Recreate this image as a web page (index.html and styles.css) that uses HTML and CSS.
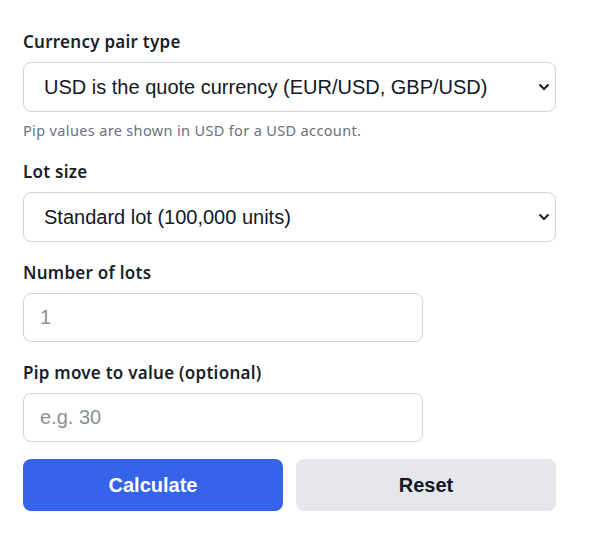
FILE: index.html
```html
<!DOCTYPE html>
<html lang="en">
<head>
<meta charset="utf-8">
<link rel="stylesheet" href="styles.css">
</head>
<body>
<form class="calc">
  <div class="group">
    <label class="label" for="pair">Currency pair type</label>
    <div class="select-wrap">
      <select id="pair" class="field select">
        <option>USD is the quote currency (EUR/USD, GBP/USD)</option>
      </select>
      <svg class="chev" width="12" height="8" viewBox="0 0 12 8"><path d="M1.5 1.5 L6 6 L10.5 1.5" fill="none" stroke="#222" stroke-width="2.2"/></svg>
    </div>
    <p class="help">Pip values are shown in USD for a USD account.</p>
  </div>
  <div class="group">
    <label class="label" for="lot">Lot size</label>
    <div class="select-wrap">
      <select id="lot" class="field select">
        <option>Standard lot (100,000 units)</option>
      </select>
      <svg class="chev" width="12" height="8" viewBox="0 0 12 8"><path d="M1.5 1.5 L6 6 L10.5 1.5" fill="none" stroke="#222" stroke-width="2.2"/></svg>
    </div>
  </div>
  <div class="group">
    <label class="label" for="lots">Number of lots</label>
    <input id="lots" class="field input" type="text" placeholder="1">
  </div>
  <div class="group">
    <label class="label" for="pips">Pip move to value (optional)</label>
    <input id="pips" class="field input" type="text" placeholder="e.g. 30">
  </div>
  <div class="actions">
    <button type="button" class="btn btn-primary">Calculate</button>
    <button type="button" class="btn btn-secondary">Reset</button>
  </div>
</form>
</body>
</html>
```
FILE: styles.css
```css
* { box-sizing: border-box; }
html, body { margin: 0; background: #fff; }
body { font-family: "Noto Sans", "Open Sans", sans-serif; color: #111827; }
.calc {
  width: 533px;
  margin: 30px 0 0 23px;
  display: flex;
  flex-direction: column;
}
.group { display: flex; flex-direction: column; margin-bottom: 19px; }
.label {
  font-size: 17px;
  font-weight: 600;
  line-height: 24px;
  letter-spacing: 0.25px;
  margin-bottom: 8px;
  color: #1a1f2b;
}
.select-wrap { position: relative; }
.field {
  display: block;
  font-family: "Liberation Sans", Arial, sans-serif;
  font-size: 20px;
  color: #111827;
  background: #fff;
  border: 1px solid #d1d5db;
  border-radius: 8px;
  outline: none;
}
.select {
  width: 533px;
  height: 50px;
  padding: 0 40px 0 20px;
  appearance: none;
  -webkit-appearance: none;
}
.chev { position: absolute; right: 6px; top: 21px; }
.input {
  width: 400px;
  height: 49px;
  padding: 0 16px;
}
.input::placeholder { color: #8a8f98; }
.help {
  margin: 8px 0 0;
  font-size: 14.5px;
  line-height: 21px;
  letter-spacing: 0.35px;
  color: #6b7280;
}
.actions {
  display: flex;
  gap: 13px;
  margin-top: -2px;
}
.btn {
  flex: 1;
  height: 52px;
  border: none;
  border-radius: 8px;
  font-family: "Liberation Sans", Arial, sans-serif;
  font-size: 20px;
  font-weight: 700;
}
.btn-primary { background: #3563e9; color: #fff; }
.btn-secondary { background: #e5e7eb; color: #111827; }
```
